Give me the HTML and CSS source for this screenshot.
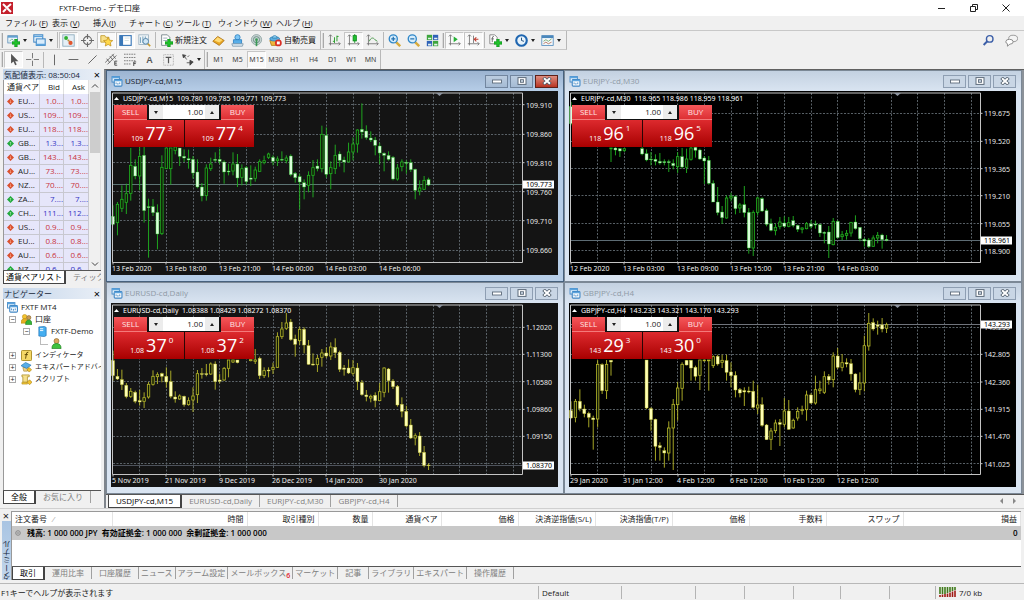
FILE: index.html
```html
<!DOCTYPE html>
<html lang="ja">
<head>
<meta charset="utf-8">
<title>FXTF-Demo - デモ口座</title>
<meta name="viewport" content="width=device-width, initial-scale=1">
<link rel="stylesheet" href="styles.css">
</head>
<body>
<svg class="sprite" aria-hidden="true">
  <defs>
    <symbol id="i-plus" viewBox="0 0 10 10"><path d="M3.500 0h3v3.500h3.500v3h-3.500v3.500h-3v-3.500h-3.500v-3h3.500z" fill="#1fc32a" stroke="#0a8a18" stroke-width=".8"/></symbol>
    <symbol id="i-newchart" viewBox="0 0 16 16"><rect x="1" y="2" width="12" height="9" fill="#eef5fb" stroke="#5d8fb8"/><path d="M1 3.500h12" stroke="#5d9fd0" stroke-width="2"/><path d="M3 9l3-3 2 2" stroke="#6a8" fill="none"/><use href="#i-plus" x="6" y="6" width="10" height="10"/></symbol>
    <symbol id="i-stack" viewBox="0 0 16 16"><rect x="1" y="1" width="11" height="9" fill="#fff" stroke="#3f86c4" stroke-width="1.300"/><path d="M1 3h11" stroke="#5ba3dd" stroke-width="2"/><rect x="4" y="6" width="11" height="8" fill="#d9ecfb" stroke="#3f86c4" stroke-width="1.300"/><path d="M4 13h11" stroke="#5ba3dd" stroke-width="2"/></symbol>
    <symbol id="i-market" viewBox="0 0 16 16"><rect x="1" y="1" width="14" height="14" fill="#e4eff6" stroke="#86a6b8"/><circle cx="5" cy="5" r="2.400" fill="#30b030"/><circle cx="10.500" cy="11" r="2.600" fill="#e0562e"/><circle cx="8" cy="8" r="1.300" fill="#b8903a"/></symbol>
    <symbol id="i-target" viewBox="0 0 16 16"><circle cx="8" cy="8" r="5" fill="none" stroke="#6a6a6a" stroke-width="1.400"/><path d="M8 0v6M8 10v6M0 8h6M10 8h6" stroke="#6a6a6a" stroke-width="1.400"/></symbol>
    <symbol id="i-star" viewBox="0 0 16 16"><path d="M1 2h5l1 2h4v6H1z" fill="#f8e08a" stroke="#c29a2a"/><path d="M10 4l1.700 3.600 4 .5-3 2.700.8 4-3.500-2-3.500 2 .8-4-3-2.700 4-.5z" fill="#ffd84a" stroke="#c08f1a" stroke-width=".9"/></symbol>
    <symbol id="i-panel" viewBox="0 0 16 16"><rect x="1" y="2" width="14" height="12" fill="#fff" stroke="#3a78b8" stroke-width="1.400"/><rect x="1" y="2" width="4" height="12" fill="#3a78b8"/><path d="M7 5h6M7 8h5" stroke="#cdd" /></symbol>
    <symbol id="i-tester" viewBox="0 0 16 16"><rect x="1" y="1" width="12" height="12" fill="#eef4f8" stroke="#9ab0c0"/><path d="M3 4v7M6 3v8M9 3v4" stroke="#5d90b0"/><circle cx="9.500" cy="9" r="3.500" fill="#cfe6f6" stroke="#5585a8" stroke-width="1.200"/><path d="M12 12l3 3" stroke="#c89a2c" stroke-width="2"/></symbol>
    <symbol id="i-order" viewBox="0 0 16 16"><path d="M2 1h7l3 3v10H2z" fill="#fff" stroke="#6a7a80"/><path d="M4 5h5M4 8h5" stroke="#89a"/><use href="#i-plus" x="6" y="6" width="10" height="10"/></symbol>
    <symbol id="i-gold" viewBox="0 0 16 16"><path d="M1 9l6-6 8 5-6 6z" fill="#e9a824" stroke="#a86d10"/><path d="M3 8l4-4 6 3.500-4 3z" fill="#ffdb76"/></symbol>
    <symbol id="i-laptop" viewBox="0 0 16 16"><circle cx="8" cy="4" r="3.200" fill="#7cc5f5" stroke="#2a7fc0"/><path d="M3 7h10v5H3z" fill="#58aee8" stroke="#2a7fc0"/><path d="M1 12h14l-1 3H2z" fill="#dfeaf2" stroke="#7a98ac"/></symbol>
    <symbol id="i-signal" viewBox="0 0 16 16"><circle cx="8" cy="7" r="6.300" fill="#c9d4d4" stroke="#8aa0a0"/><circle cx="8" cy="7" r="3.800" fill="none" stroke="#6c8f88" stroke-width="1.200"/><circle cx="8" cy="7" r="1.700" fill="#3c9a56"/><path d="M8 8v7" stroke="#3c9a56" stroke-width="2"/></symbol>
    <symbol id="i-auto" viewBox="0 0 16 16"><path d="M1 8h9l-1 6H3z" fill="#f0b63a" stroke="#b07c14"/><ellipse cx="7" cy="6" rx="6" ry="2.600" fill="#5fb0e0" stroke="#2f80b4"/><path d="M4 5c0-4 6-4 6 0z" fill="#8fd0f2" stroke="#2f80b4"/><circle cx="11.500" cy="11" r="4.200" fill="#d93025"/><rect x="9.700" y="9.200" width="3.600" height="3.600" fill="#fff"/></symbol>
    <symbol id="i-bars" viewBox="0 0 16 16"><path d="M3 1v13M1 12h14M1 3l2-2 2 2M13 10l2 2-2 2" stroke="#6b6b6b" fill="none"/><path d="M8 4v7M8 9H6M11 2v7M11 3h2" stroke="#2ea02e" stroke-width="1.200"/></symbol>
    <symbol id="i-candle" viewBox="0 0 16 16"><path d="M3 1v13M1 12h14M1 3l2-2 2 2M13 10l2 2-2 2" stroke="#6b6b6b" fill="none"/><path d="M9.500 0v11" stroke="#0a8a18"/><rect x="7.500" y="2" width="4" height="6.500" fill="#20c030" stroke="#0a8a18"/></symbol>
    <symbol id="i-line" viewBox="0 0 16 16"><path d="M3 1v13M1 12h14M1 3l2-2 2 2M13 10l2 2-2 2" stroke="#6b6b6b" fill="none"/><path d="M4 9c2-5 5-5 7-2l3 2" stroke="#4f9a4f" fill="none" stroke-width="1.200"/></symbol>
    <symbol id="i-zoomin" viewBox="0 0 16 16"><path d="M9 9l6 6" stroke="#d8ab3c" stroke-width="3"/><circle cx="6.500" cy="6" r="5" fill="#d5ecfb" stroke="#2f86c8" stroke-width="1.600"/><path d="M4 6h5M6.500 3.500v5" stroke="#2270b0" stroke-width="1.500"/></symbol>
    <symbol id="i-zoomout" viewBox="0 0 16 16"><path d="M9 9l6 6" stroke="#d8ab3c" stroke-width="3"/><circle cx="6.500" cy="6" r="5" fill="#d5ecfb" stroke="#2f86c8" stroke-width="1.600"/><path d="M4 6h5" stroke="#2270b0" stroke-width="1.500"/></symbol>
    <symbol id="i-tiles" viewBox="0 0 16 16"><rect x="1" y="1" width="6.500" height="6.500" fill="#3da53d"/><rect x="8.500" y="1" width="6.500" height="6.500" fill="#2f62b8"/><rect x="1" y="8.500" width="6.500" height="6.500" fill="#2f62b8"/><rect x="8.500" y="8.500" width="6.500" height="6.500" fill="#3da53d"/><path d="M2.500 4.500h4v2h-4zM10 4.500h4v2h-4zM2.500 12h4v2h-4zM10 12h4v2h-4z" fill="#e6f2ee"/></symbol>
    <symbol id="i-scroll" viewBox="0 0 16 16"><path d="M3 1v13M1 12h14M1 3l2-2 2 2M13 10l2 2-2 2" stroke="#6b6b6b" fill="none"/><path d="M7 3l5 3.500-5 3.500z" fill="#25b035"/></symbol>
    <symbol id="i-shift" viewBox="0 0 16 16"><path d="M3 1v13M1 12h14M1 3l2-2 2 2M13 10l2 2-2 2M8 2v9" stroke="#6b6b6b" fill="none"/><path d="M14 6.500h-5M11.500 4L9 6.500 11.500 9" stroke="#c0392b" fill="none" stroke-width="1.300"/></symbol>
    <symbol id="i-indic" viewBox="0 0 16 16"><path d="M1 1h6l3 3v8H1z" fill="#fff" stroke="#777"/><path d="M4 10V5q0-2 2-2M3 6h3" stroke="#555" fill="none"/><use href="#i-plus" x="6" y="6" width="10" height="10"/></symbol>
    <symbol id="i-clock" viewBox="0 0 16 16"><circle cx="8" cy="8" r="6.500" fill="#e8f3fb" stroke="#1f66b0" stroke-width="2.600"/><path d="M8 8V4.500M8 8l3 1" stroke="#1f4f80" stroke-width="1.200"/></symbol>
    <symbol id="i-template" viewBox="0 0 16 16"><rect x="1" y="2" width="14" height="12" fill="#f4f8fb" stroke="#4b87bb"/><path d="M1 3.500h14" stroke="#4b87bb" stroke-width="3"/><path d="M3 9l3-2 3 2 4-3" stroke="#6aa060" fill="none"/><path d="M3 12l3-2 3 2 4-2" stroke="#b06a50" fill="none"/></symbol>
    <symbol id="i-cursor" viewBox="0 0 16 16"><path d="M5 1v12l3-2.500 2 4.500 2-1-2-4h4z" fill="#555"/></symbol>
    <symbol id="i-cross" viewBox="0 0 16 16"><path d="M8 0v6.500M8 9.500V16M0 8h6.500M9.500 8H16" stroke="#777" stroke-width="1.200"/></symbol>
    <symbol id="i-vline" viewBox="0 0 16 16"><path d="M8 2v13" stroke="#666" stroke-width="1.200"/></symbol>
    <symbol id="i-hline" viewBox="0 0 16 16"><path d="M2 8h12" stroke="#666" stroke-width="1.200"/></symbol>
    <symbol id="i-diag" viewBox="0 0 16 16"><path d="M3 13L13 3" stroke="#666" stroke-width="1.200"/></symbol>
    <symbol id="i-channel" viewBox="0 0 16 16"><path d="M0 12L11 1M3 14L14 3M2 7l4 5M6 4l4 5M9 2l4 5" stroke="#555" fill="none"/><path d="M15 10h-3v5h3M12 12.500h2.500" stroke="#333" fill="none"/></symbol>
    <symbol id="i-fibo" viewBox="0 0 16 16"><path d="M0 1.500h15M0 5.500h15M0 9.500h15M0 13.500h9" stroke="#666" stroke-dasharray="2 1"/><path d="M15 11h-3v5M12 13h2.500" stroke="#333" fill="none"/></symbol>
    <symbol id="i-tbox" viewBox="0 0 16 16"><rect x="2" y="2" width="12" height="13" fill="none" stroke="#999" stroke-dasharray="1 1"/><path d="M4.500 5.500h7M8 5.500v7" stroke="#555" stroke-width="1.500"/></symbol>
    <symbol id="i-arrows" viewBox="0 0 16 16"><path d="M2 2l4 1-3 3zM4 4l3 4M11 9l4 2-4 4zM7 12h4M8 5l2-2" stroke="#444" fill="#444"/></symbol>
    <symbol id="i-chart" viewBox="0 0 12 12"><rect x=".6" y=".6" width="8" height="6" fill="#e8f4fd" stroke="#3f86c4"/><path d="M.6 1.500h8" stroke="#5ba3dd" stroke-width="2"/><rect x="3" y="4" width="8.400" height="7" rx="1" fill="#fff" stroke="#3f86c4" stroke-width="1.200"/><path d="M3 5h8.400" stroke="#5ba3dd" stroke-width="1.600"/><path d="M5 9V7M7 9.500V7.500M9 9V7" stroke="#3f86c4"/></symbol>
    <symbol id="i-down" viewBox="0 0 8 8"><path d="M4 0l4 4-4 4-4-4z" fill="#d9502e"/><path d="M4 2v3.500M3 4.500l1 1 1-1" stroke="#ffb9a0" stroke-width=".6" fill="none"/></symbol>
    <symbol id="i-up" viewBox="0 0 8 8"><path d="M4 0l4 4-4 4-4-4z" fill="#22a83c"/><path d="M4 6V2.500M3 3.500l1-1 1 1" stroke="#b8f5b8" stroke-width=".6" fill="none"/></symbol>
    <symbol id="i-people" viewBox="0 0 12 12"><circle cx="4" cy="3" r="2.500" fill="#f4c430" stroke="#b58a10" stroke-width=".6"/><path d="M0 10q0-5 4-5t4 5z" fill="#e8b020" stroke="#b58a10" stroke-width=".6"/><circle cx="8.500" cy="4" r="2.300" fill="#c99a55" stroke="#7c5a20" stroke-width=".6"/><path d="M5 11.500q0-5 3.500-5t3.500 5z" fill="#36b336" stroke="#167a16" stroke-width=".6"/></symbol>
    <symbol id="i-person" viewBox="0 0 12 12"><circle cx="6" cy="3.300" r="2.700" fill="#d9a860" stroke="#8a6220" stroke-width=".7"/><path d="M1 11.500q0-5.500 5-5.500t5 5.500z" fill="#3fc23f" stroke="#167a16" stroke-width=".7"/></symbol>
    <symbol id="i-server" viewBox="0 0 12 12"><path d="M2 1l6-.5 2 1v9l-2 1-6-.5z" fill="#45aef0" stroke="#1a6fb4" stroke-width=".7"/><path d="M3.300 3h3.500M3.300 5h3.500" stroke="#fff"/></symbol>
    <symbol id="i-fx" viewBox="0 0 12 12"><rect x=".5" y=".5" width="11" height="11" rx="1" fill="#f5d867" stroke="#a88a20"/><path d="M8 2.500q-2-.5-2.200 2L5 9.500M4 5h3.500" stroke="#5a4300" fill="none"/></symbol>
    <symbol id="i-expert" viewBox="0 0 12 12"><path d="M2 6h6l-1 4H3z" fill="#ead08a" stroke="#9a7a20" stroke-width=".6"/><path d="M0 4l5-3.500L11 3.500 6 7z" fill="#58aee8" stroke="#2272ae" stroke-width=".7"/><path d="M9 6l2.500 2.500L9 11 6.500 8.500z" fill="#f4c430" stroke="#a88010" stroke-width=".7"/></symbol>
    <symbol id="i-script" viewBox="0 0 12 12"><path d="M1 1h8v2H7v6h-5V3H1z" fill="#f6e08c" stroke="#a88a20" stroke-width=".8"/><path d="M1 9h6v2H1z" fill="#f4c430" stroke="#a88a20" stroke-width=".6"/><path d="M9.300 6.300L12 9l-2.700 2.700L6.600 9z" fill="#f4c430" stroke="#a88010" stroke-width=".7"/></symbol>
    <symbol id="i-min" viewBox="0 0 12 8"><rect x="1.500" y="3" width="9" height="3" fill="#fff" stroke="#5d6b7a" stroke-width=".9"/></symbol>
    <symbol id="i-max" viewBox="0 0 12 8"><rect x="2" y=".6" width="8" height="6.800" fill="#fff" stroke="#5d6b7a"/><rect x="4.500" y="2.700" width="3" height="2.600" fill="#c8d5e3" stroke="#5d6b7a" stroke-width=".9"/></symbol>
    <symbol id="i-close" viewBox="0 0 12 8"><path d="M2.500.8L9.500 7.200M9.500.8L2.500 7.200" stroke="#4a5866" stroke-width="3.400"/><path d="M3 1.200L9 6.800M9 1.200L3 6.800" stroke="#fff" stroke-width="1.900"/></symbol>
  </defs>
</svg>

<header class="titlebar">
  <svg class="applogo" viewBox="0 0 12 12" aria-hidden="true"><rect width="12" height="12" fill="#c4202c"/><path d="M2 2l8 8M6.500 5L10 2M2 10l3-3" stroke="#fff" stroke-width="2"/></svg>
  <h1 class="apptitle">FXTF-Demo - デモ口座</h1>
  <div class="syscontrols">
    <button class="sysbtn" aria-label="最小化"><svg viewBox="0 0 8 8"><path d="M0 4.500h7" stroke="#222"/></svg></button>
    <button class="sysbtn" aria-label="元に戻す"><svg viewBox="0 0 8 8"><path d="M.5 2.500h5v5h-5zM2.500 2.500v-2h5v5h-2" fill="none" stroke="#222"/></svg></button>
    <button class="sysbtn" aria-label="閉じる"><svg viewBox="0 0 8 8"><path d="M.5.5l7 7M7.500.5l-7 7" stroke="#222"/></svg></button>
  </div>
</header>

<nav class="menubar">
  <button>ファイル (<u>F</u>)</button><button>表示 (<u>V</u>)</button><button>挿入(<u>I</u>)</button><button>チャート (<u>C</u>)</button><button>ツール (<u>T</u>)</button><button>ウィンドウ (<u>W</u>)</button><button>ヘルプ (<u>H</u>)</button>
</nav>

<div class="toolbar">
  <div class="toolgroup">
    <i class="grip"></i>
    <button class="tool tool-drop" aria-label="新規チャート"><svg><use href="#i-newchart"/></svg><i class="caret"></i></button>
    <button class="tool tool-drop" aria-label="プロファイル"><svg><use href="#i-stack"/></svg><i class="caret"></i></button>
    <i class="sep"></i>
    <button class="tool on" aria-label="気配値表示"><svg><use href="#i-market"/></svg></button>
    <button class="tool" aria-label="データウィンドウ"><svg><use href="#i-target"/></svg></button>
    <button class="tool on" aria-label="ナビゲーター"><svg><use href="#i-star"/></svg></button>
    <button class="tool on" aria-label="ターミナル"><svg><use href="#i-panel"/></svg></button>
    <button class="tool" aria-label="ストラテジーテスター"><svg><use href="#i-tester"/></svg></button>
    <i class="sep"></i>
    <button class="tool tool-text"><svg><use href="#i-order"/></svg>新規注文</button>
    <button class="tool" aria-label="エディター"><svg><use href="#i-gold"/></svg></button>
    <button class="tool" aria-label="コミュニティ"><svg><use href="#i-laptop"/></svg></button>
    <button class="tool" aria-label="シグナル"><svg><use href="#i-signal"/></svg></button>
    <button class="tool tool-text"><svg><use href="#i-auto"/></svg>自動売買</button>
  </div>
  <div class="toolgroup">
    <i class="grip"></i>
    <button class="tool" aria-label="バーチャート"><svg><use href="#i-bars"/></svg></button>
    <button class="tool on" aria-label="ローソク足"><svg><use href="#i-candle"/></svg></button>
    <button class="tool" aria-label="ラインチャート"><svg><use href="#i-line"/></svg></button>
    <i class="sep"></i>
    <button class="tool" aria-label="拡大"><svg><use href="#i-zoomin"/></svg></button>
    <button class="tool" aria-label="縮小"><svg><use href="#i-zoomout"/></svg></button>
    <button class="tool" aria-label="整列"><svg><use href="#i-tiles"/></svg></button>
    <i class="grip"></i>
    <button class="tool on" aria-label="自動スクロール"><svg><use href="#i-scroll"/></svg></button>
    <button class="tool on" aria-label="チャートシフト"><svg><use href="#i-shift"/></svg></button>
    <i class="sep"></i>
    <button class="tool tool-drop" aria-label="インディケータ"><svg><use href="#i-indic"/></svg><i class="caret"></i></button>
    <button class="tool tool-drop" aria-label="時間足"><svg><use href="#i-clock"/></svg><i class="caret"></i></button>
    <button class="tool tool-drop" aria-label="定型チャート"><svg><use href="#i-template"/></svg><i class="caret"></i></button>
  </div>
  <div class="toolend">
    <button class="tool" aria-label="検索"><svg viewBox="0 0 16 16"><circle cx="9.500" cy="6" r="4" fill="none" stroke="#3c5fa8" stroke-width="1.800"/><path d="M6.500 9L2 13.500" stroke="#3c5fa8" stroke-width="2.400"/></svg></button>
    <button class="tool" aria-label="チャット"><svg viewBox="0 0 16 16"><ellipse cx="10" cy="5.500" rx="5.500" ry="4" fill="#f4f4f4" stroke="#8a8a8a"/><path d="M1 9.500q0-3 4.500-3t4.500 3-4 3l-3 2.500v-3q-2-.5-2-2.500z" fill="#fff" stroke="#777"/></svg></button>
  </div>
</div>

<div class="toolbar toolbar-2">
  <div class="toolgroup">
    <i class="grip"></i>
    <button class="tool on" aria-label="カーソル"><svg><use href="#i-cursor"/></svg></button>
    <button class="tool" aria-label="十字カーソル"><svg><use href="#i-cross"/></svg></button>
    <i class="sep"></i>
    <button class="tool" aria-label="垂直線"><svg><use href="#i-vline"/></svg></button>
    <button class="tool" aria-label="水平線"><svg><use href="#i-hline"/></svg></button>
    <button class="tool" aria-label="トレンドライン"><svg><use href="#i-diag"/></svg></button>
    <button class="tool" aria-label="チャネル"><svg><use href="#i-channel"/></svg></button>
    <button class="tool" aria-label="フィボナッチ"><svg><use href="#i-fibo"/></svg></button>
    <button class="tool letter">A</button>
    <button class="tool" aria-label="ラベル"><svg><use href="#i-tbox"/></svg></button>
    <button class="tool tool-drop" aria-label="矢印"><svg><use href="#i-arrows"/></svg><i class="caret"></i></button>
  </div>
  <div class="toolgroup periods">
    <i class="grip"></i>
    <button class="tool">M1</button><button class="tool">M5</button><button class="tool on">M15</button><button class="tool">M30</button><button class="tool">H1</button><button class="tool">H4</button><button class="tool">D1</button><button class="tool">W1</button><button class="tool">MN</button>
  </div>
</div>

<main class="workspace">
  <aside class="dock">
    <section class="panel market">
      <header class="paneltitle"><h2>気配値表示: 08:50:04</h2><button aria-label="閉じる">×</button></header>
      <div class="quotes">
        <table>
          <colgroup><col><col class="c-bid"><col class="c-ask"></colgroup>
          <thead><tr><th>通貨ペア</th><th>Bid</th><th>Ask</th></tr></thead>
          <tbody>
            <tr class="dn"><td><svg><use href="#i-down"/></svg>EU...</td><td>1.0...</td><td>1.0...</td></tr>
            <tr class="dn"><td><svg><use href="#i-down"/></svg>US...</td><td>109...</td><td>109...</td></tr>
            <tr class="dn"><td><svg><use href="#i-down"/></svg>EU...</td><td>118...</td><td>118...</td></tr>
            <tr class="up"><td><svg><use href="#i-up"/></svg>GB...</td><td>1.3...</td><td>1.3...</td></tr>
            <tr class="dn"><td><svg><use href="#i-down"/></svg>GB...</td><td>143...</td><td>143...</td></tr>
            <tr class="dn"><td><svg><use href="#i-down"/></svg>AU...</td><td>73....</td><td>73....</td></tr>
            <tr class="dn"><td><svg><use href="#i-down"/></svg>NZ...</td><td>70....</td><td>70....</td></tr>
            <tr class="up"><td><svg><use href="#i-up"/></svg>ZA...</td><td>7....</td><td>7....</td></tr>
            <tr class="up"><td><svg><use href="#i-up"/></svg>CH...</td><td>111...</td><td>112...</td></tr>
            <tr class="dn"><td><svg><use href="#i-down"/></svg>US...</td><td>0.9...</td><td>0.9...</td></tr>
            <tr class="dn"><td><svg><use href="#i-down"/></svg>EU...</td><td>0.8...</td><td>0.8...</td></tr>
            <tr class="dn"><td><svg><use href="#i-down"/></svg>AU...</td><td>0.6...</td><td>0.6...</td></tr>
            <tr class="up"><td><svg><use href="#i-up"/></svg>NZ...</td><td>0.6...</td><td>0.6...</td></tr>
          </tbody>
        </table>
        <div class="scroll">
          <svg viewBox="0 0 8 8"><path d="M1 5.500l3-3 3 3" fill="none" stroke="#444"/></svg>
          <i></i>
          <svg class="scroll-dn" viewBox="0 0 8 8"><path d="M1 2.500l3 3 3-3" fill="none" stroke="#444"/></svg>
        </div>
      </div>
      <div class="tabs"><button class="tab active">通貨ペアリスト</button><button class="tab">ティックチャート</button></div>
    </section>
    <section class="panel navigator">
      <header class="paneltitle"><h2>ナビゲーター</h2><button aria-label="閉じる">×</button></header>
      <ul class="tree">
        <li><svg class="ticon"><use href="#i-chart"/></svg>FXTF MT4</li>
        <li class="l1"><i class="box">−</i><svg class="ticon"><use href="#i-people"/></svg>口座</li>
        <li class="l2"><i class="box">−</i><svg class="ticon"><use href="#i-server"/></svg>FXTF-Demo</li>
        <li class="l3"><i class="elbow"></i><svg class="ticon"><use href="#i-person"/></svg></li>
        <li class="l1 kana"><i class="box">+</i><svg class="ticon"><use href="#i-fx"/></svg>インディケータ</li>
        <li class="l1 kana"><i class="box">+</i><svg class="ticon"><use href="#i-expert"/></svg>エキスパートアドバイザ</li>
        <li class="l1 kana"><i class="box">+</i><svg class="ticon"><use href="#i-script"/></svg>スクリプト</li>
      </ul>
      <div class="tabs"><button class="tab active">全般</button><button class="tab">お気に入り</button></div>
    </section>
  </aside>

  <section class="mdi">
    <div class="windows">
      <article class="win active">
        <header class="wintitle"><svg class="ticon"><use href="#i-chart"/></svg><h2>USDJPY-cd,M15</h2>
          <button aria-label="最小化"><svg><use href="#i-min"/></svg></button><button aria-label="最大化"><svg><use href="#i-max"/></svg></button><button class="x" aria-label="閉じる"><svg><use href="#i-close"/></svg></button></header>
        <div class="chart"><svg class="plot" viewBox="0 0 447 184" data-chart="usdjpy"></svg>
          <form class="trade">
            <button type="button" class="side">SELL</button>
            <div class="lots"><button type="button" aria-label="減らす"><i class="caret"></i></button><input aria-label="数量" value="1.00"><button type="button" aria-label="増やす"><i class="caret flip"></i></button></div>
            <button type="button" class="side">BUY</button>
            <div class="prices">
              <button type="button" class="price"><small>109</small><b>77</b><sup>3</sup></button>
              <button type="button" class="price"><small>109</small><b>77</b><sup>4</sup></button>
            </div>
          </form></div>
      </article>
      <article class="win">
        <header class="wintitle"><svg class="ticon"><use href="#i-chart"/></svg><h2>EURJPY-cd,M30</h2>
          <button aria-label="最小化"><svg><use href="#i-min"/></svg></button><button aria-label="最大化"><svg><use href="#i-max"/></svg></button><button aria-label="閉じる"><svg><use href="#i-close"/></svg></button></header>
        <div class="chart dark"><svg class="plot" viewBox="0 0 447 184" data-chart="eurjpy"></svg>
          <form class="trade">
            <button type="button" class="side">SELL</button>
            <div class="lots"><button type="button" aria-label="減らす"><i class="caret"></i></button><input aria-label="数量" value="1.00"><button type="button" aria-label="増やす"><i class="caret flip"></i></button></div>
            <button type="button" class="side">BUY</button>
            <div class="prices">
              <button type="button" class="price"><small>118</small><b>96</b><sup>1</sup></button>
              <button type="button" class="price"><small>118</small><b>96</b><sup>5</sup></button>
            </div>
          </form></div>
      </article>
      <article class="win">
        <header class="wintitle"><svg class="ticon"><use href="#i-chart"/></svg><h2>EURUSD-cd,Daily</h2>
          <button aria-label="最小化"><svg><use href="#i-min"/></svg></button><button aria-label="最大化"><svg><use href="#i-max"/></svg></button><button aria-label="閉じる"><svg><use href="#i-close"/></svg></button></header>
        <div class="chart"><svg class="plot" viewBox="0 0 447 184" data-chart="eurusd"></svg>
          <form class="trade">
            <button type="button" class="side">SELL</button>
            <div class="lots"><button type="button" aria-label="減らす"><i class="caret"></i></button><input aria-label="数量" value="1.00"><button type="button" aria-label="増やす"><i class="caret flip"></i></button></div>
            <button type="button" class="side">BUY</button>
            <div class="prices">
              <button type="button" class="price"><small>1.08</small><b>37</b><sup>0</sup></button>
              <button type="button" class="price"><small>1.08</small><b>37</b><sup>2</sup></button>
            </div>
          </form></div>
      </article>
      <article class="win">
        <header class="wintitle"><svg class="ticon"><use href="#i-chart"/></svg><h2>GBPJPY-cd,H4</h2>
          <button aria-label="最小化"><svg><use href="#i-min"/></svg></button><button aria-label="最大化"><svg><use href="#i-max"/></svg></button><button aria-label="閉じる"><svg><use href="#i-close"/></svg></button></header>
        <div class="chart dark"><svg class="plot" viewBox="0 0 447 184" data-chart="gbpjpy"></svg>
          <form class="trade">
            <button type="button" class="side">SELL</button>
            <div class="lots"><button type="button" aria-label="減らす"><i class="caret"></i></button><input aria-label="数量" value="1.00"><button type="button" aria-label="増やす"><i class="caret flip"></i></button></div>
            <button type="button" class="side">BUY</button>
            <div class="prices">
              <button type="button" class="price"><small>143</small><b>29</b><sup>3</sup></button>
              <button type="button" class="price"><small>143</small><b>30</b><sup>0</sup></button>
            </div>
          </form></div>
      </article>
    </div>
    <div class="tabs charttabs">
      <button class="tab active">USDJPY-cd,M15</button><button class="tab">EURUSD-cd,Daily</button><button class="tab">EURJPY-cd,M30</button><button class="tab">GBPJPY-cd,H4</button>
      <div class="tabarrows"><i class="tri-l"></i><i class="tri-r"></i></div>
    </div>
  </section>
</main>

<section class="terminal">
  <div class="spine"><button aria-label="閉じる">×</button><h2>ターミナル</h2></div>
  <div class="termbody">
    <table class="orders">
      <colgroup><col class="w100"><col class="w135"><col class="w71"><col class="w54"><col class="w69"><col class="w77"><col class="w77"><col class="w77"><col class="w77"><col class="w77"><col class="w77"><col></colgroup>
      <thead><tr><th>注文番号 <span class="sort">⁄</span></th><th>時間</th><th>取引種別</th><th>数量</th><th>通貨ペア</th><th>価格</th><th>決済逆指値(S/L)</th><th>決済指値(T/P)</th><th>価格</th><th>手数料</th><th>スワップ</th><th>損益</th></tr></thead>
      <tbody><tr><td colspan="11"><svg class="dot" viewBox="0 0 6 6"><circle cx="3" cy="3" r="2.300" fill="none" stroke="#888"/><path d="M1.800 3h2.400" stroke="#888"/></svg>残高: 1 000 000 JPY&nbsp; 有効証拠金: 1 000 000&nbsp; 余剰証拠金: 1 000 000</td><td>0</td></tr></tbody>
    </table>
    <div class="tabs termtabs">
      <button class="tab active">取引</button><button class="tab">運用比率</button><button class="tab">口座履歴</button><button class="tab kana">ニュース</button><button class="tab kana">アラーム設定</button><button class="tab kana">メールボックス<sub>6</sub></button><button class="tab kana">マーケット</button><button class="tab">記事</button><button class="tab kana">ライブラリ</button><button class="tab kana">エキスパート</button><button class="tab">操作履歴</button>
    </div>
  </div>
</section>

<footer class="status">
  <span class="help">F1キーでヘルプが表示されます</span>
  <span class="s83">Default</span><span class="s74"></span><span class="s49"></span><span class="s49"></span><span class="s47"></span><span class="s49"></span><span class="s46"></span>
  <span class="net"><svg viewBox="0 0 17 10"><path d="M1 0v7M3.500 0v7M6 0v7M8.500 0v6M11 0v5M13.500 0v4M16 0v3" stroke="#3f7a1a" stroke-width="1.600"/><path d="M1 8v2M3.500 7.500V10M6 7v3M8.500 6.500V10M11 5.500V10M13.500 4.500V10M16 3.500V10" stroke="#a01a14" stroke-width="1.600"/></svg>7/0 kb</span>
</footer>
<script src="charts.js"></script>
</body>
</html>
```

FILE: styles.css
```css
*, *::before, *::after { box-sizing: border-box; }

body {
  margin: 0;
  min-height: 100vh;
  display: flex;
  flex-direction: column;
  background: #f0f0f0;
  color: #1a1a1a;
  font: 8px/12px "Open Sans", "Noto Sans CJK JP", sans-serif;
}

h1, h2 { margin: 0; font: inherit; }
button, input { font: inherit; color: inherit; margin: 0; padding: 0; border: 0; background: none; }
button { white-space: nowrap; }
i { font-style: normal; }
svg { display: block; flex: none; }
.sprite { position: absolute; width: 0; height: 0; }

/* title bar and menu */
.titlebar { display: flex; align-items: center; height: 16px; background: #fff; color: #111; padding-left: 1px; }
.applogo { width: 12px; height: 12px; margin-right: 46px; }
.syscontrols { margin-left: auto; display: flex; padding-right: 2px; }
.sysbtn { width: 32px; height: 16px; display: grid; place-items: center; }
.sysbtn svg { width: 8px; height: 8px; }

.menubar { height: 14px; padding-left: 5px; display: grid; grid-template-columns: 47px 41px 36px 47px 42px 58px auto; justify-content: start; align-items: center; }
.menubar button { text-align: left; }

/* toolbars */
.toolbar { display: flex; height: 20px; border-top: 1px solid #c8c8c8; }
.toolbar-2 { height: 19px; border-top: 0; }
.toolgroup { display: flex; align-items: center; padding-left: 1px; padding-right: 2px; border-right: 1px solid #b8b8b8; border-bottom: 1px solid #c8c8c8; }
.toolbar-2 .toolgroup { border-bottom: 0; padding-right: 0; }
.grip { width: 2px; height: 15px; margin: 0 1px 0 0; background: #dadada; border-right: 1px solid #a8a8a8; }
.sep { width: 1px; height: 16px; margin: 0 1px; background: #b8b8b8; }
.tool { display: flex; align-items: center; justify-content: center; width: 19px; height: 17px; }
.tool svg { width: 13px; height: 13px; }
.tool.on { background: #f9f9f9; border: 1px solid #c6c6c6; border-right-color: #fff; border-bottom-color: #fff; }
.tool-drop { width: 26px; gap: 3px; }
.tool-text { width: auto; gap: 2px; padding: 0 2px 0 3px; color: #111; }
.toolend { margin-left: auto; display: flex; gap: 4px; align-items: center; padding-right: 3px; }
.caret { width: 0; height: 0; border: 2px solid transparent; border-top: 3px solid #222; border-bottom: 0; }
.caret.flip { border-top: 0; border-bottom: 3px solid #222; }
.letter { font: bold 9px "Liberation Sans", sans-serif; color: #555; }
.periods { font: 7px/12px "Noto Sans", sans-serif; color: #444; }

/* workspace */
.workspace { display: flex; }
.dock { width: 104px; flex: none; display: flex; flex-direction: column; gap: 4px; padding: 0 3px 4px; }
.panel { display: flex; flex-direction: column; }
.navigator { flex: 1; }
.paneltitle { display: flex; justify-content: space-between; align-items: center; height: 11px; padding: 0 1px; background: linear-gradient(90deg, #c3d5ea, #e8eef6); white-space: nowrap; }
.paneltitle h2 { color: #16263a; }
.paneltitle button { font-size: 11px; line-height: 10px; color: #000; }

.quotes { display: flex; height: 190px; overflow: hidden; background: #fff; border-left: 1px solid #999; }
.quotes table { flex: 1; border-collapse: collapse; table-layout: fixed; width: 86px; height: 196px; }
.c-bid { width: 24px; }
.c-ask { width: 25px; }
.quotes th { height: 14px; padding: 0 4px 0 3px; font-weight: 400; text-align: left; background: #fff; border-right: 1px solid #e0e0e0; white-space: nowrap; }
.quotes th + th { text-align: right; padding: 0 3px 0 0; }
.quotes td { height: 14px; padding: 0; background: #e6e6fa; border-right: 1px solid #c8c8d0; border-bottom: 1px solid #c8c8d0; text-align: right; white-space: nowrap; }
.quotes td:first-child { text-align: left; color: #222; }
.quotes td svg { display: inline-block; width: 7px; height: 7px; margin: 0 4px 0 3px; vertical-align: -1px; }
.dn td { color: #c83240; }
.up td { color: #3434c4; }
.scroll { width: 12px; display: flex; flex-direction: column; align-items: center; padding: 2px 0; background: #f0f0f0; border-right: 1px solid #ddd; }
.scroll svg { width: 8px; height: 8px; }
.scroll i { width: 10px; height: 61px; margin-top: 2px; background: #cdcdcd; }
.scroll .scroll-dn { margin-top: auto; }

.tabs { display: flex; height: 14px; border-top: 1px solid #555; overflow: hidden; }
.tab { height: 12px; padding: 0 7px; color: #808080; line-height: 12px; border-right: 1px solid #a0a0a0; }
.tab.active { height: 13px; background: #fff; color: #000; border: solid #444; border-width: 0 2px 1px 1px; }
.dock .tab { flex: none; }
.market .tab.active { padding: 0 2px; }

.tree { flex: 1; list-style: none; margin: 0; padding: 2px 0 0 3px; background: #fff; border-left: 1px solid #999; overflow: hidden; width: 98px; }
.tree li { display: flex; align-items: center; height: 12px; gap: 3px; white-space: nowrap; }
.tree .l1 { padding-left: 2px; }
.tree .l2 { padding-left: 16px; }
.tree .l3 { padding-left: 33px; }
.tree .kana { font-size: 7px; }
.ticon { width: 11px; height: 11px; }
.box { width: 7px; height: 7px; flex: none; border: 1px solid #aaa; font: 7px/5px "Liberation Sans", sans-serif; text-align: center; background: #fff; margin-right: 2px; }
.l2 .box { margin-right: 4px; }
.elbow { width: 8px; height: 8px; border: solid #bbb; border-width: 0 0 1px 1px; margin-bottom: 4px; }

/* chart windows */
.mdi { flex: 1; min-width: 0; border-top: 1px solid #606060; border-left: 2px solid #7f858c; }
.windows { display: grid; grid-template-columns: 1fr 1fr; padding-right: 2px; background: #8c9299; }
.win { min-width: 0; padding: 0 5px 6px 4px; border: 1px solid #7b8896; background: linear-gradient(#c3d1e1, #d9e4f1 20px); }
.win.active { background: linear-gradient(#9cb4d1, #b6cde7 20px); border-color: #47617d; }
.wintitle { display: flex; align-items: center; height: 20px; gap: 2px; color: #8f9aa6; }
.wintitle h2 { margin-right: auto; }
.win.active .wintitle { color: #15202c; }
.wintitle .ticon { width: 12px; }
.wintitle button { width: 23px; height: 13px; display: grid; place-items: center; border: 1px solid #8e9eb2; background: #c9d6e5; }
.wintitle button svg { width: 12px; height: 8px; }
.win.active .wintitle button { background: linear-gradient(#bccde0, #a5bbd4); border-color: #72869f; }
.win.active .wintitle .x { background: linear-gradient(#de8d80, #b93422); border-color: #5e2018; }
.chart { position: relative; background: #141414; }
.chart.dark { background: #000; }
.plot { width: 100%; height: auto; font: 7px "Noto Sans", sans-serif; }

/* one-click trading overlay */
.trade { position: absolute; left: 3px; top: 14px; width: 140px; display: grid; grid-template-columns: 33px minmax(0, 1fr) 33px; grid-template-rows: 15px 27px; background: #2a0505; }
.side { color: #ffe4e4; background: linear-gradient(#f5575a, #dd3034); border-bottom: 1px solid #f47a7a; }
.lots { display: flex; min-width: 0; background: #111; padding: 0 2px 1px; }
.lots button { width: 14px; flex: none; background: #ececec; display: grid; place-items: center; }
.lots input { flex: 1; width: 0; min-width: 0; background: #fff; text-align: right; padding-right: 2px; color: #222; }
.prices { grid-column: 1 / 4; height: 27px; display: grid; grid-template: 27px / 1fr 1fr; gap: 1px; }
.price { display: flex; height: 27px; align-items: flex-end; justify-content: center; gap: 2px; padding: 0 0 2px 6px; color: #fff; background: linear-gradient(#dd2a2e, #a80000); }
.price small { font-size: 7px; line-height: 13px; }
.price b { font-size: 18px; line-height: 23px; font-weight: 400; }
.price sup { font-size: 8px; line-height: 12px; align-self: flex-start; padding-top: 2px; }

.charttabs { background: #f0f0f0; align-items: flex-start; padding-left: 2px; }
.tabarrows { margin-left: auto; display: flex; gap: 10px; padding: 3px 8px 0 0; }
.tri-l, .tri-r { width: 0; height: 0; border: 3px solid transparent; }
.tri-l { border-right-color: #888; border-left: 0; }
.tri-r { border-left-color: #888; border-right: 0; }

/* terminal */
.terminal { flex: 1; display: flex; padding: 2px 3px 3px 1px; border-top: 1px solid #d0d0d0; border-bottom: 1px solid #b8b8b8; }
.spine { width: 10px; display: flex; flex-direction: column; align-items: center; }
.spine button { font-size: 11px; line-height: 9px; }
.spine h2 { flex: 1; width: 9px; margin-top: 1px; background: linear-gradient(#c2d6ec, #a9c4e2); writing-mode: vertical-rl; transform: rotate(180deg); line-height: 9px; color: #16263a; }
.termbody { flex: 1; min-width: 0; display: flex; flex-direction: column; background: #fff; border-top: 1px solid #999; border-left: 1px solid #999; }
.orders { width: 100%; border-collapse: collapse; table-layout: fixed; }
.w100 { width: 100px; }
.w135 { width: 135px; }
.w71 { width: 71px; }
.w54 { width: 54px; }
.w69 { width: 69px; }
.w77 { width: 77px; }
.orders th { height: 14px; padding: 0 3px; font-weight: 400; text-align: right; border-right: 1px solid #e4e4e4; white-space: nowrap; }
.orders th:first-child { text-align: left; }
.sort { color: #999; margin-left: 4px; }
.orders td { height: 14px; padding: 0 3px; background: #c8c8c8; font-weight: 600; color: #000; white-space: nowrap; }
.orders td:last-child { text-align: right; }
.dot { display: inline-block; width: 6px; height: 6px; margin-right: 6px; }
.termtabs { margin-top: auto; background: #f0f0f0; }
.termtabs .tab.kana { padding: 0 2px; }
.termtabs sub { font-size: 7px; line-height: 1; color: #e01828; font-weight: 600; vertical-align: -2px; }

/* status bar */
.status { display: flex; height: 16px; align-items: center; }
.status span { height: 13px; line-height: 13px; border-left: 1px solid #b4b4b4; padding-left: 3px; }
.status .help { flex: 1; border: 0; padding-left: 1px; }
.s83 { width: 83px; }
.s74 { width: 74px; }
.s49 { width: 49px; }
.s47 { width: 47px; }
.s46 { width: 46px; }
.net { width: 89px; display: flex; align-items: center; gap: 3px; }
.net svg { width: 17px; height: 10px; }
```

FILE: charts.js
```js
// Candle rows: index, high, open/close top, open/close bottom, low, filled.
// Vertical values are in thirds of a plot unit, measured from BASE.
const BASE = 57;
const STEP = 40 / 9;

const CHARTS = {
  usdjpy: {
    head: "USDJPY-cd,M15\u00a0 109.780 109.785 109.771 109.773",
    x0: 2, line: "#20b520", body: "#d9ffd9", price: 338, priceText: "109.773", priceLine: "#5d7474",
    rows: [[98, "109.910"], [187, "109.860"], [272, "109.810"], [359, "109.760"], [446, "109.710"], [535, "109.660"]],
    dates: ["13 Feb 2020", "13 Feb 18:00", "13 Feb 21:00", "14 Feb 00:00", "14 Feb 03:00", "14 Feb 06:00"],
    data: "0 400 433 457 460 1;1 390 397 452 490 0;2 340 382 409 420 0;3 335 365 391 426 0;4 228 280 364 386 0;5 262 283 312 322 1;6 225 253 312 355 0;7 225 250 416 452 1;8 380 404 407 557 1;9 381 404 422 432 1;10 397 421 486 532 1;11 250 286 485 489 0;12 228 228 290 290 0;13 228 228 290 338 0;14 225 225 235 247 0;15 228 228 253 282 1;16 232 253 258 270 1;17 233 260 264 290 1;18 252 262 303 320 1;19 262 300 345 349 1;20 333 345 372 388 1;21 277 288 371 386 0;22 257 276 290 297 0;23 241 262 265 270 1;24 230 262 268 277 1;25 265 270 300 335 1;26 275 297 300 310 1;27 241 276 297 310 0;28 246 276 318 345 1;29 277 290 316 340 0;30 282 287 329 338 1;31 280 318 322 342 1;32 284 294 319 329 0;33 262 269 298 300 0;34 251 266 272 277 0;35 242 246 256 261 0;36 250 256 268 280 1;37 253 261 266 282 0;38 238 262 264 268 1;39 250 258 266 274 0;40 247 252 308 313 1;41 300 304 317 332 1;42 305 314 330 412 1;43 322 332 345 382 1;44 298 310 340 361 0;45 264 287 310 376 0;46 262 282 290 298 1;47 161 187 290 301 0;48 166 190 307 317 1;49 268 287 305 352 0;50 218 250 290 306 0;51 238 246 265 284 1;52 254 264 270 301 1;53 212 240 270 270 0;54 196 216 240 265 0;55 172 174 216 242 0;56 94 172 180 200 1;57 160 177 197 203 1;58 178 198 204 210 1;59 195 204 220 250 1;60 213 222 243 277 1;61 241 244 250 298 1;62 238 250 262 266 1;63 252 256 321 325 1;64 276 288 321 326 0;65 262 270 284 298 0;66 265 271 274 305 1;67 262 272 293 300 1;68 290 292 355 382 1;69 325 348 357 370 0;70 312 325 352 354 0;71 317 323 339 342 1"
  },
  eurjpy: {
    head: "EURJPY-cd,M30\u00a0 118.965 118.986 118.959 118.961",
    x0: 2, line: "#20b520", body: "#d9ffd9", price: 505, priceText: "118.961", priceLine: "#5d6c74",
    rows: [[124, "119.675"], [208, "119.520"], [290, "119.365"], [371, "119.210"], [455, "119.055"], [536, "118.900"]],
    dates: ["12 Feb 2020", "13 Feb 03:00", "13 Feb 09:00", "13 Feb 15:00", "13 Feb 21:00", "14 Feb 03:00"],
    data: "0 90 104 155 160 1;9 228 228 230 270 0;10 226 228 234 250 1;11 228 230 237 255 1;12 228 230 236 240 0;16 225 230 246 250 1;17 232 245 264 268 1;18 240 261 263 280 1;19 247 262 268 280 1;20 243 268 273 278 1;21 262 269 272 280 1;22 263 269 272 300 1;23 262 274 281 292 1;24 240 254 284 303 0;25 228 254 285 290 1;26 230 261 286 303 0;27 225 228 262 266 0;28 222 226 235 257 1;29 230 234 261 264 1;30 252 258 267 336 1;31 252 265 334 338 1;32 325 334 390 390 1;33 345 390 422 430 1;34 402 420 437 456 1;35 370 378 438 440 0;36 362 373 378 388 0;37 370 374 410 427 1;38 393 399 408 423 0;39 342 398 422 436 1;40 408 421 528 545 1;41 415 421 528 552 0;42 374 378 421 430 0;43 376 380 417 420 1;44 410 416 457 463 1;45 440 455 475 478 1;46 455 466 476 490 0;47 435 450 464 472 0;48 433 453 463 466 1;49 435 452 463 466 0;50 432 446 460 466 1;51 458 460 472 480 1;52 466 468 472 484 0;53 450 455 470 472 0;54 444 456 463 470 1;55 446 456 459 470 1;56 455 458 483 495 1;57 478 481 484 514 1;58 462 480 516 558 1;59 438 448 518 520 0;60 445 448 497 500 1;61 477 488 494 505 0;62 474 484 490 503 0;63 450 451 483 494 0;64 430 450 470 473 1;65 466 466 500 508 1;66 498 502 507 524 1;67 498 504 524 528 1;68 490 498 523 525 0;69 480 490 498 514 0;70 485 489 503 530 1;71 489 502 506 508 1"
  },
  eurusd: {
    head: "EURUSD-cd,Daily\u00a0 1.08388 1.08429 1.08272 1.08370",
    x0: 2, line: "#b9b92a", body: "#ffffb4", price: 545, priceText: "1.08370", priceLine: "#4e535c",
    rows: [[130, "1.12020"], [211, "1.11300"], [293, "1.10580"], [376, "1.09860"], [457, "1.09150"], [539, ""]],
    dates: ["5 Nov 2019", "21 Nov 2019", "9 Dec 2019", "26 Dec 2019", "14 Jan 2020", "30 Jan 2020"],
    data: "0 200 230 275 290 1;1 255 277 285 288 1;2 257 287 302 318 1;3 297 304 338 343 1;4 312 322 337 342 0;5 320 325 352 358 1;6 318 350 354 365 1;7 325 341 352 372 0;8 294 301 339 344 0;9 259 277 301 305 0;10 265 272 278 300 0;11 266 269 277 295 1;12 250 277 294 311 1;13 260 293 337 343 1;14 322 339 345 356 1;15 331 336 345 347 0;16 335 337 362 368 1;17 340 350 362 365 0;18 310 336 348 384 0;19 258 269 332 357 0;20 252 269 271 284 1;21 240 269 272 277 1;22 235 240 270 273 0;23 232 240 293 317 1;24 270 288 292 298 1;25 249 253 288 290 0;26 228 228 253 280 0;27 228 228 234 237 0;28 228 228 236 238 1;31 226 227 230 232 0;32 195 228 232 240 0;33 218 223 275 285 1;34 250 260 275 282 0;35 250 258 261 280 1;36 236 250 256 270 0;37 145 158 250 252 0;38 114 135 158 165 0;39 87 117 133 138 0;40 105 114 167 170 1;41 152 165 181 218 1;42 128 136 170 183 0;43 130 136 183 208 1;44 168 185 241 242 1;45 208 240 243 245 1;46 213 223 242 264 0;47 195 207 220 248 0;48 190 207 216 222 1;49 175 189 216 228 0;50 163 190 206 222 1;51 200 205 256 264 1;52 243 252 256 275 1;53 226 252 267 270 1;54 228 251 268 275 0;55 237 252 293 318 1;56 288 296 332 335 1;57 318 333 338 352 1;58 332 337 342 355 0;59 325 334 350 370 1;60 297 323 350 350 0;61 250 252 325 340 0;62 252 255 290 326 1;63 285 291 308 315 1;64 303 307 363 368 1;65 340 361 382 400 1;66 365 382 426 430 1;67 405 423 462 465 1;68 448 455 462 484 0;69 444 456 506 516 1;70 486 505 544 550 1;71 538 543 545 558 1"
  },
  gbpjpy: {
    head: "GBPJPY-cd,H4\u00a0 143.233 143.321 143.170 143.293",
    x0: 2, line: "#b9b92a", body: "#ffffb4", price: 122, priceText: "143.293", priceLine: "#70747c",
    rows: [[130, "143.250"], [211, "142.805"], [294, "142.360"], [376, "141.915"], [457, "141.470"], [539, "141.025"]],
    dates: ["29 Jan 2020", "31 Jan 12:00", "4 Feb 12:00", "6 Feb 12:00", "10 Feb 12:00", "12 Feb 12:00"],
    data: "0 352 380 402 404 1;1 345 352 400 415 0;2 316 352 374 382 1;3 362 375 389 400 1;4 383 388 400 430 1;5 395 402 407 497 1;6 228 241 405 430 0;7 238 242 320 330 1;8 228 241 320 345 0;9 228 229 234 275 1;17 228 228 372 375 1;18 370 374 407 440 1;19 404 406 487 530 1;20 475 485 491 530 1;21 490 500 507 551 1;22 412 432 507 530 0;23 345 361 432 558 0;24 293 312 362 410 0;25 235 241 313 350 0;26 228 229 243 244 1;27 228 229 252 290 1;28 245 250 277 290 1;29 228 228 274 318 0;30 228 228 230 232 0;31 228 228 230 320 0;32 214 218 245 252 0;33 212 217 240 245 1;34 212 229 235 252 0;35 212 230 265 290 1;36 235 264 275 310 1;37 262 274 318 340 1;38 312 317 327 340 1;39 310 320 324 366 1;40 308 321 324 328 1;41 290 322 370 374 1;42 302 363 372 390 0;43 340 362 424 428 1;44 420 423 467 468 1;45 432 441 466 498 0;46 407 417 440 448 0;47 405 416 421 486 1;48 342 381 421 430 0;49 348 381 436 437 1;50 404 409 432 434 0;51 370 382 402 410 0;52 365 377 380 392 0;53 320 333 377 410 0;54 328 333 357 360 1;55 275 317 357 362 0;56 290 315 320 330 0;57 262 278 325 330 0;58 270 277 288 302 1;59 205 216 287 310 0;60 192 216 250 255 1;61 210 236 250 262 0;62 223 236 240 250 1;63 225 239 270 290 1;64 268 270 317 325 1;65 265 297 317 333 0;66 155 185 297 322 0;67 87 118 186 200 0;68 103 116 135 140 1;69 110 123 127 152 1;70 102 123 135 145 1;71 116 122 133 147 0"
  }
};

const RIGHT = 411.5;
const BOTTOM = 171.5;
const toY = v => (v - BASE) / 3;

function draw(svg, c) {
  const out = [];
  for (const [v] of c.rows) {
    const y = Math.floor(toY(v)) + 0.5;
    out.push(`<path d="M2 ${y}H${RIGHT}" stroke="#626b72" stroke-width=".9" stroke-dasharray="2 1.500"/>`);
  }
  for (let n = 1; n <= 15; n++) {
    const x = Math.floor(c.x0 + n * 80 / 3) + 0.5;
    out.push(`<path d="M${x} 2V${BOTTOM}" stroke="#626b72" stroke-width=".9" stroke-dasharray="2 1.500"/>`);
  }
  const py = Math.floor(toY(c.price)) + 0.5;
  out.push(`<path d="M2 ${py}H${RIGHT}" stroke="${c.priceLine}"/>`);

  for (const row of c.data.split(";")) {
    const [n, hi, top, bot, lo, filled] = row.split(" ").map(Number);
    const x = c.x0 + n * STEP;
    const t = toY(top), b = toY(bot), h = Math.max(b - t, 0.8);
    if (filled) {
      out.push(`<path d="M${x} ${toY(hi)}V${toY(lo)}" stroke="${c.line}" stroke-width=".9"/>`);
      out.push(`<rect x="${x - 1.5}" y="${t}" width="3" height="${h}" fill="${c.body}" stroke="${c.line}" stroke-width=".4"/>`);
    } else {
      out.push(`<path d="M${x} ${toY(hi)}V${t}M${x} ${b}V${toY(lo)}" stroke="${c.line}" stroke-width=".9"/>`);
      out.push(`<rect x="${x - 1.2}" y="${t}" width="2.400" height="${h}" fill="#101a06" stroke="${c.line}" stroke-width=".8"/>`);
    }
  }

  out.push(`<path d="M1.500 ${BOTTOM}V2H${RIGHT}V${BOTTOM}Z" fill="none" stroke="#c4c4c4"/>`);
  out.push(`<path d="M325 2h7l-3.500 3z" fill="#8d94a0"/>`);
  out.push(`<path d="M3 9h5l-2.500-3z" fill="#fff"/><text x="12" y="10" fill="#fff">${c.head}</text>`);
  for (const [v, label] of c.rows) {
    if (!label) continue;
    out.push(`<path d="M${RIGHT} ${toY(v)}h2" stroke="#c4c4c4"/><text x="415" y="${Math.round(toY(v)) + 3}" fill="#e8e8e8">${label}</text>`);
  }
  out.push(`<rect x="412" y="${py - 4}" width="31" height="8" fill="#fff"/><text x="415" y="${py + 2.5}" fill="#000">${c.priceText}</text>`);
  c.dates.forEach((d, i) => {
    const x = Math.round(c.x0 + i * 160 / 3);
    out.push(`<path d="M${x} ${BOTTOM}v2" stroke="#c4c4c4"/><text x="${x - 1}" y="180" fill="#f0f0f0">${d}</text>`);
  });
  svg.innerHTML = out.join("");
}

document.querySelectorAll(".plot").forEach(s => draw(s, CHARTS[s.dataset.chart]));
```
